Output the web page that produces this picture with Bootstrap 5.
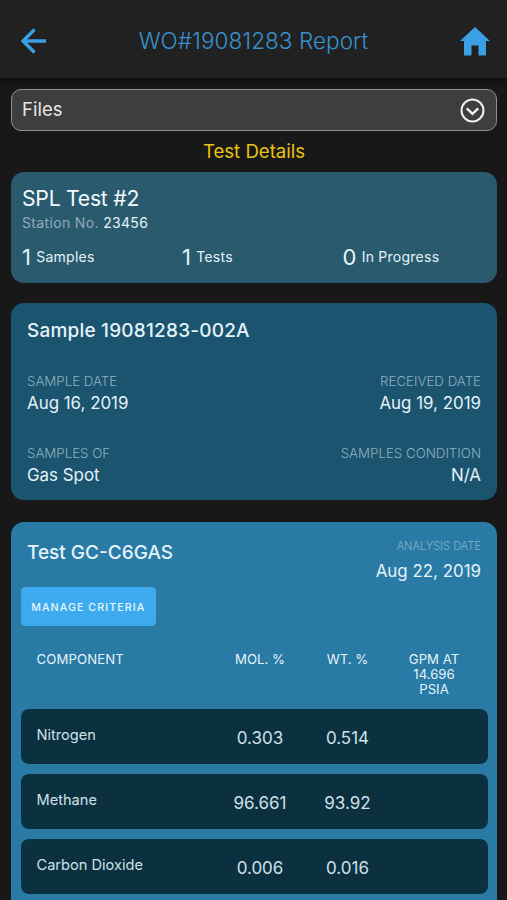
<!DOCTYPE html>
<html lang="en">
<head>
<meta charset="utf-8">
<meta name="viewport" content="width=device-width, initial-scale=1">
<title>WO#19081283 Report</title>
<link href="https://cdn.jsdelivr.net/npm/bootstrap@5.3.0/dist/css/bootstrap.min.css" rel="stylesheet">
<style>
  body { background: #181818; color: #e4f2fa; font-family: Inter, "Liberation Sans", sans-serif; height: 900px; overflow: hidden; }
  main { padding: 0 10px 0 11px; }
  .topbar { height: 78px; background: #212121; box-shadow: 0 1px 6px #090909; padding: 4px 16px 0 20px; }
  .topbar h1 { color: #3891cc; font-size: 22.6px; font-weight: 300; line-height: 28px; padding-left: 1px; }
  .files-toggle { height: 42px; margin-top: 10.5px; padding: 1px 11px 0 10px; border: 1.5px solid #8f8f8f; border-radius: 10px; background: #3e3e3e; color: #e6e6e6; font-size: 18.5px; }
  .section-title { color: #e8c40e; font-size: 18.6px; font-weight: 400; line-height: 24px; margin: 8.4px 0 9.1px; }
  .panel { border: 0; border-radius: 13px; color: #e4f2fa; }
  .panel-station { background: #2a5a6e; height: 111px; padding: 13.5px 11px 0; }
  .panel-sample { background: #1b546e; height: 197.5px; margin-top: 20px; padding: 16px 16px 0; }
  .panel-test { background: #297aa5; height: 377.5px; margin-top: 22px; padding: 0 9.5px; border-radius: 13px 13px 0 0; }
  .station-name { font-size: 21.2px; font-weight: 400; line-height: 26px; letter-spacing: -.25px; color: #f2faff; }
  .station-no { font-size: 14px; line-height: 18px; letter-spacing: .35px; margin-top: 2.5px; color: #8fabb9; }
  .station-no span { color: #e4f2fa; letter-spacing: .3px; }
  .stats { display: grid; grid-template-columns: 160px 160.5px 1fr; margin-top: 10.8px; }
  .stat { font-size: 14px; line-height: 28px; letter-spacing: .25px; }
  .stat b { font-size: 22px; font-weight: 400; margin-right: 5px; }
  .panel-title { font-size: 19px; font-weight: 500; line-height: 24px; }
  .panel-sample .panel-title { letter-spacing: .2px; }
  .pair { margin-top: 29px; }
  .pair + .pair { margin-top: 29px; }
  .caption { font-size: 13.3px; font-weight: 300; line-height: 18px; color: #8db0c0; }
  .value { font-size: 16.9px; line-height: 24px; margin-top: 1.2px; }
  .test-head { height: 64.5px; padding: 18.3px 6.5px 0; }
  .test-head .caption { font-size: 11.1px; line-height: 12px; margin-top: -.8px; color: #84b0c6; }
  .test-head .value { margin-top: 7px; }
  .btn-criteria { --bs-btn-color: #e8f6ff; --bs-btn-bg: #3eabf0; --bs-btn-border-color: #3eabf0; width: 135.5px; height: 39px; padding: 3px 0 0; border-radius: 4px; font-size: 10.6px; font-weight: 500; letter-spacing: 1.1px; }
  .grid-row { display: grid; grid-template-columns: 195px 89px 86px 87px; }
  .grid-head { font-size: 13.2px; line-height: 14.7px; margin-top: 26.5px; height: 57px; }
  .grid-head div:first-child { letter-spacing: .1px; }
  .grid-item { height: 54.7px; margin-bottom: 10px; border-radius: 8px; background: #0b3040; color: #cfe0e8; }
  .grid-item:last-child { margin-bottom: 0; }
  .grid-item .name { font-size: 14.6px; line-height: 20px; padding-top: 16px; }
  .grid-item .num { font-size: 17px; line-height: 22px; padding-top: 17.8px; }
</style>
<script src="https://cdn.jsdelivr.net/npm/bootstrap@5.3.0/dist/js/bootstrap.bundle.min.js"></script>
</head>
<body>
<header class="topbar d-flex align-items-center justify-content-between">
  <svg width="27" height="26" viewBox="0 0 27 26" fill="none" stroke="#3a9fe3" stroke-width="3.3"><path d="M26 13H3M14.5 1.5L3 13l11.5 11.5"/></svg>
  <h1 class="m-0">WO#19081283 Report</h1>
  <svg width="32" height="30" viewBox="0 0 32 30" fill="#3a9fe3"><path d="M16 1L1 15H5v14.500h7.500V19.500h7V29.500H27V15h4z"/></svg>
</header>
<main class="d-flex flex-column">
  <div class="files-toggle d-flex align-items-center justify-content-between">
    <span>Files</span>
    <svg width="25" height="25" viewBox="0 0 25 25" fill="none" stroke="#f0f0f0" stroke-width="2"><circle cx="12.500" cy="12.500" r="11"/><path stroke-width="2.400" d="M6.800 10.300l5.700 5.500 5.700-5.500"/></svg>
  </div>
  <h2 class="section-title text-center">Test Details</h2>

  <section class="card panel panel-station">
    <h3 class="station-name m-0">SPL Test #2</h3>
    <div class="station-no">Station No. <span>23456</span></div>
    <div class="stats">
      <div class="stat d-flex align-items-center"><b>1</b>Samples</div>
      <div class="stat d-flex align-items-center"><b>1</b>Tests</div>
      <div class="stat d-flex align-items-center"><b>0</b>In Progress</div>
    </div>
  </section>

  <section class="card panel panel-sample">
    <h3 class="panel-title m-0">Sample 19081283-002A</h3>
    <div class="pair d-flex justify-content-between">
      <div><div class="caption">SAMPLE DATE</div><div class="value">Aug 16, 2019</div></div>
      <div class="text-end"><div class="caption">RECEIVED DATE</div><div class="value">Aug 19, 2019</div></div>
    </div>
    <div class="pair d-flex justify-content-between">
      <div><div class="caption">SAMPLES OF</div><div class="value">Gas Spot</div></div>
      <div class="text-end"><div class="caption">SAMPLES CONDITION</div><div class="value">N/A</div></div>
    </div>
  </section>

  <section class="card panel panel-test">
    <div class="test-head d-flex justify-content-between">
      <h3 class="panel-title m-0">Test GC-C6GAS</h3>
      <div class="text-end"><div class="caption">ANALYSIS DATE</div><div class="value">Aug 22, 2019</div></div>
    </div>
    <button type="button" class="btn btn-criteria">MANAGE CRITERIA</button>
    <div class="grid-row grid-head text-center">
      <div class="text-start ps-3">COMPONENT</div><div>MOL. %</div><div>WT. %</div><div>GPM AT<br>14.696<br>PSIA</div>
    </div>
    <div class="grid-row grid-item text-center">
      <div class="name text-start ps-3">Nitrogen</div><div class="num">0.303</div><div class="num">0.514</div>
    </div>
    <div class="grid-row grid-item text-center">
      <div class="name text-start ps-3">Methane</div><div class="num">96.661</div><div class="num">93.92</div>
    </div>
    <div class="grid-row grid-item text-center">
      <div class="name text-start ps-3">Carbon Dioxide</div><div class="num">0.006</div><div class="num">0.016</div>
    </div>
  </section>
</main>
</body>
</html>
